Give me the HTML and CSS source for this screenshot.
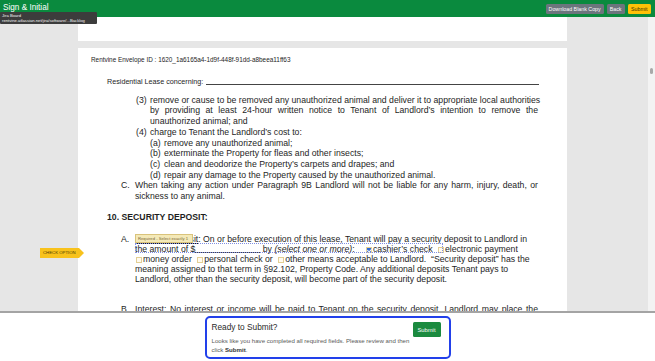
FILE: index.html
```html
<!DOCTYPE html>
<html>
<head>
<meta charset="utf-8">
<link rel="stylesheet" href="styles.css">
</head>
<body>
<header class="topbar">
  <div class="title">Sign &amp; Initial</div>
  <div class="actions">
    <span class="btn btn-grey">Download Blank Copy</span>
    <span class="btn btn-grey">Back</span>
    <span class="btn btn-yellow">Submit</span>
  </div>
</header>
<div class="linktip">Jira Board<br>rentvine.atlassian.net/jira/software/...Backlog</div>

<main class="viewer">
  <div class="pages">
    <div class="page page-prev"></div>
    <div class="page">
      <div class="envelope">Rentvine Envelope ID : 1620_1a6165a4-1d9f-448f-91dd-a8beea11ff63</div>
      <div class="concerning"><span class="plain">Residential Lease concerning:</span> <span class="blank-long"></span></div>

      <div class="list">
        <div class="item lvl2">
          <span class="num">(3)</span>
          <div class="txt">
            <span class="j">remove or cause to be removed any unauthorized animal and deliver it to appropriate local authorities</span>
            <span class="j">by providing at least 24-hour written notice to Tenant of Landlord’s intention to remove the</span>
            <span class="l">unauthorized animal; and</span>
          </div>
        </div>
        <div class="item lvl2">
          <span class="num">(4)</span>
          <div class="txt">
            <span class="l">charge to Tenant the Landlord’s cost to:</span>
            <div class="item">
              <span class="num">(a)</span><span class="l">remove any unauthorized animal;</span>
            </div>
            <div class="item">
              <span class="num">(b)</span><span class="l">exterminate the Property for fleas and other insects;</span>
            </div>
            <div class="item">
              <span class="num">(c)</span><span class="l">clean and deodorize the Property’s carpets and drapes; and</span>
            </div>
            <div class="item">
              <span class="num">(d)</span><span class="l">repair any damage to the Property caused by the unauthorized animal.</span>
            </div>
          </div>
        </div>
        <div class="item lvl1">
          <span class="num">C.</span>
          <div class="txt">
            <span class="j">When taking any action under Paragraph 9B Landlord will not be liable for any harm, injury, death, or</span>
            <span class="l">sickness to any animal.</span>
          </div>
        </div>
      </div>

      <h2 class="section">10. SECURITY DEPOSIT:</h2>

      <div class="item lvl1 para">
        <span class="num">A.</span>
        <div class="txt deposit">
          <span class="l"><u>Security Deposit</u>: On or before execution of this lease, Tenant will pay a security deposit to Landlord in</span>
          <span class="l">the amount of $<span class="blank-short"></span> by <i>(select one or more)</i>: <span class="cb cb-on cb-first"></span>cashier’s check <span class="cb"></span>electronic payment</span>
          <span class="l"><span class="cb"></span>money order <span class="cb"></span>personal check or <span class="cb"></span>other means acceptable to Landlord.&nbsp; “Security deposit” has the</span>
          <span class="l">meaning assigned to that term in §92.102, Property Code. Any additional deposits Tenant pays to</span>
          <span class="l">Landlord, other than the security deposit, will become part of the security deposit.</span>
          <div class="group-outline"></div>
          <div class="required">Required - Select exactly 1</div>
        </div>
      </div>

      <div class="item lvl1 para-b">
        <span class="num">B.</span>
        <div class="txt">
          <span class="j">Interest: No interest or income will be paid to Tenant on the security deposit. Landlord may place the</span>
        </div>
      </div>
    </div>
  </div>
  <div class="scrollbar"><div class="thumb"></div></div>
  <div class="check-tag">CHECK OPTION</div>
</main>

<footer class="bottom">
  <div class="ready">
    <div class="ready-text">
      <div class="ready-title">Ready to Submit?</div>
      <div class="ready-body">Looks like you have completed all required fields. Please review and then<br>click <b>Submit</b>.</div>
    </div>
    <span class="btn-submit">Submit</span>
  </div>
</footer>
</body>
</html>
```

FILE: styles.css
```css
* { box-sizing: border-box; }

html, body {
  margin: 0;
  padding: 0;
  width: 655px;
  height: 361px;
  overflow: hidden;
  background: #ffffff;
  font-family: "Liberation Sans", Arial, sans-serif;
}

body { position: relative; }

/* top bar */
.topbar {
  height: 17px;
  background: #0a8a3e;
  display: flex;
  align-items: center;
  justify-content: space-between;
  padding: 0 4px 0 3px;
}

.title {
  color: #ffffff;
  font-size: 8.2px;
  line-height: 10px;
  margin-top: -2px;
}

.actions {
  display: flex;
  gap: 3px;
  align-items: center;
}

.btn {
  display: inline-flex;
  align-items: center;
  justify-content: center;
  height: 10px;
  padding: 0 3px;
  border-radius: 1.5px;
  font-size: 5.3px;
  color: #ffffff;
  white-space: nowrap;
}

.btn-grey { background: #6c757d; }
.btn-yellow { background: #ffc107; color: #3a3000; padding: 0 3.5px; }

.linktip {
  position: absolute;
  left: 0;
  top: 12px;
  width: 97px;
  height: 12px;
  background: #3c3c3c;
  color: #f2f2f2;
  font-size: 4.2px;
  line-height: 5px;
  padding: 1px 2px;
  border-radius: 1px;
  white-space: nowrap;
  z-index: 5;
}

/* document viewer */
.viewer {
  position: relative;
  height: 296px;
  background: #e6e6e6;
  border-bottom: 2px solid #a4a4a4;
  display: flex;
  overflow: hidden;
}

.pages {
  flex: 1;
  padding-left: 78px;
  display: flex;
  flex-direction: column;
  gap: 7px;
}

.page {
  width: 489px;
  background: #ffffff;
  flex: none;
  padding: 8px 29px 0 13px;
  color: #1e1e1e;
}

.page-prev {
  height: 24px;
  padding: 0;
}

.scrollbar {
  width: 7px;
  flex: none;
  background: #f3f3f3;
  position: relative;
}

.thumb {
  position: absolute;
  left: 2px;
  top: 51px;
  width: 3px;
  height: 6px;
  border-radius: 2px;
  background: #a9a9a9;
}

.check-tag {
  position: absolute;
  left: 40px;
  top: 231px;
  height: 10px;
  width: 39px;
  background: #f8c21c;
  color: #4a3a00;
  font-size: 4.3px;
  line-height: 10px;
  padding-left: 3px;
  white-space: nowrap;
}

.check-tag::after {
  content: "";
  position: absolute;
  right: -5px;
  top: 0;
  border-left: 5px solid #f8c21c;
  border-top: 5px solid transparent;
  border-bottom: 5px solid transparent;
}

/* page content */
.envelope {
  font-size: 6.4px;
  line-height: 8px;
  white-space: nowrap;
}

.concerning {
  margin: 12.5px 0 0 16px;
  font-size: 7.2px;
  line-height: 9px;
  white-space: nowrap;
  color: #1e1e1e;
}

.plain { color: #1e1e1e; }

.blank-long {
  display: inline-block;
  width: 333px;
  border-bottom: 0.8px solid #444;
  vertical-align: -1px;
  margin-left: 1px;
}

.list {
  margin-top: 9.2px;
  font-size: 8.7px;
  line-height: 10.7px;
}

.item {
  display: flex;
}

.num {
  flex: none;
  width: 14px;
}

.txt {
  flex: 1;
  min-width: 0;
}

.lvl2 { margin-left: 45px; }
.lvl1 { margin-left: 30px; }

.j {
  display: block;
  white-space: nowrap;
  text-align: justify;
  text-align-last: justify;
}

.l {
  display: block;
  white-space: nowrap;
}

.section {
  margin: 10.3px 0 0 16px;
  font-size: 8.7px;
  line-height: 10.7px;
  font-weight: bold;
}

.para {
  margin-top: 11.7px;
  font-size: 8.7px;
  line-height: 10px;
}

.deposit { position: relative; }

.blank-short {
  display: inline-block;
  width: 65px;
  border-bottom: 0.8px solid #444;
  vertical-align: -1px;
}

.cb {
  display: inline-block;
  width: 6px;
  height: 6px;
  border: 1px solid #e3cf94;
  background: #fffaf0;
  vertical-align: -0.5px;
  margin: 0 1px 0 3px;
  position: relative;
}

.l > .cb:first-child { margin-left: 1px; }

.cb-first { margin-left: 9px; }

.cb-on {
  background: #2f68d8;
  border-color: #e3cf94;
}

.cb-on::after {
  content: "";
  position: absolute;
  left: 1.2px;
  top: 0;
  width: 1.6px;
  height: 3px;
  border: solid #ffffff;
  border-width: 0 1px 1px 0;
  transform: rotate(45deg);
}

.group-outline {
  position: absolute;
  left: 0;
  top: 9px;
  width: 308px;
  height: 10px;
  border: 1px dotted #7f8fe2;
  pointer-events: none;
}

.required {
  position: absolute;
  left: 0;
  top: 0;
  width: 58px;
  height: 9px;
  background: #f4e9b8;
  border: 0.8px solid #d9c37b;
  color: #7b6a3a;
  font-size: 4.2px;
  line-height: 7.5px;
  padding-left: 2px;
  white-space: nowrap;
}

.para-b {
  margin-top: 20px;
  font-size: 8.7px;
  line-height: 10px;
}

/* bottom panel */
.bottom {
  height: 48px;
  display: flex;
  justify-content: center;
  padding-top: 3px;
}

.ready {
  width: 246px;
  height: 43px;
  border: 2px solid #2240ea;
  border-radius: 5px;
  display: flex;
  justify-content: space-between;
  align-items: flex-start;
  padding: 4px 8px 0 5px;
  background: #ffffff;
}

.ready-title {
  font-size: 8.3px;
  line-height: 10px;
  color: #2a2a2a;
}

.ready-body {
  margin-top: 3.5px;
  font-size: 6.1px;
  line-height: 9px;
  color: #5a5a5a;
  white-space: nowrap;
}

.ready-body b { color: #333333; }

.btn-submit {
  flex: none;
  width: 28px;
  height: 15px;
  background: #1b8a3f;
  color: #ffffff;
  font-size: 5.8px;
  display: flex;
  align-items: center;
  justify-content: center;
  border-radius: 1.5px;
}
```
